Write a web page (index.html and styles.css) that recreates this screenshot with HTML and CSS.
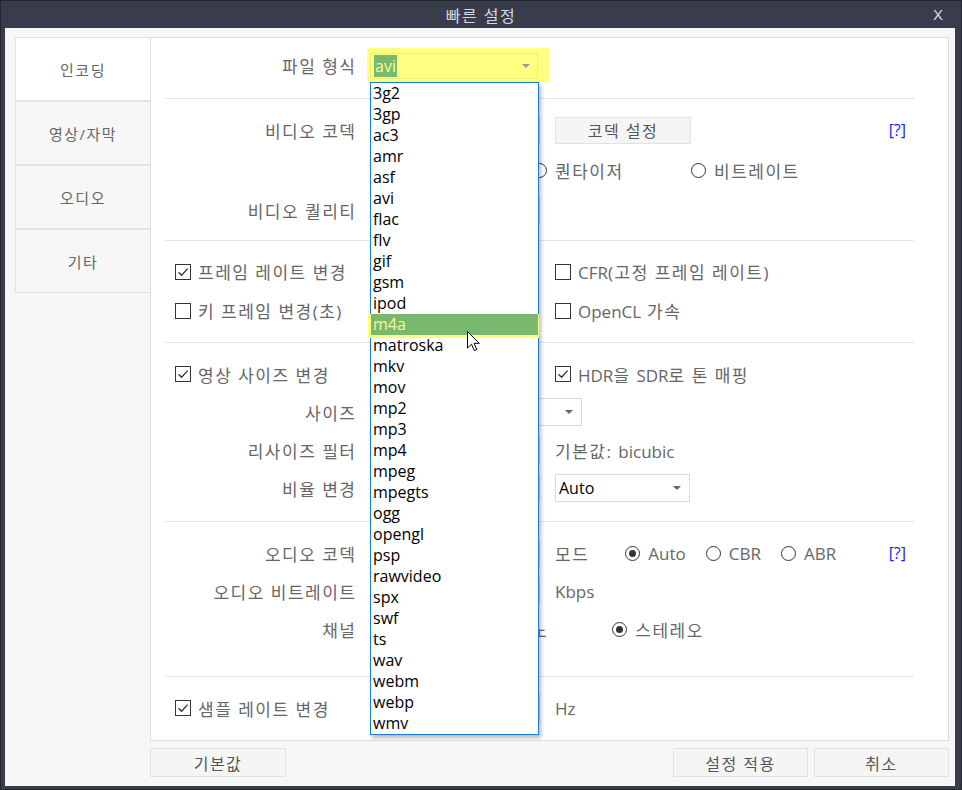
FILE: index.html
```html
<!DOCTYPE html>
<html lang="ko">

<head>
    <meta charset="UTF-8">
    <meta name="viewport" content="width=device-width, initial-scale=1.0">
    <title>빠른 설정</title>
    <link rel="stylesheet" href="styles.css">
</head>

<body>
    <div class="window">
        <div class="titlebar">
            <span class="title">빠른 설정</span>
            <span class="close">X</span>
        </div>
        <div class="client">
            <div class="main">
                <ul class="tabs">
                    <li class="tab active">인코딩</li>
                    <li class="tab">영상/자막</li>
                    <li class="tab">오디오</li>
                    <li class="tab">기타</li>
                </ul>
                <div class="panel">
                    <!-- file format -->
                    <section class="sec sec-format">
                        <div class="row">
                            <span class="lbl">파일 형식</span>
                            <div class="hl">
                                <div class="select sel-format"><span class="sel-text">avi</span><span class="caret"></span></div>
                                <ul class="droplist">
                                    <li>3g2</li>
                                    <li>3gp</li>
                                    <li>ac3</li>
                                    <li>amr</li>
                                    <li>asf</li>
                                    <li>avi</li>
                                    <li>flac</li>
                                    <li>flv</li>
                                    <li>gif</li>
                                    <li>gsm</li>
                                    <li>ipod</li>
                                    <li class="hot">m4a</li>
                                    <li>matroska</li>
                                    <li>mkv</li>
                                    <li>mov</li>
                                    <li>mp2</li>
                                    <li>mp3</li>
                                    <li>mp4</li>
                                    <li>mpeg</li>
                                    <li>mpegts</li>
                                    <li>ogg</li>
                                    <li>opengl</li>
                                    <li>psp</li>
                                    <li>rawvideo</li>
                                    <li>spx</li>
                                    <li>swf</li>
                                    <li>ts</li>
                                    <li>wav</li>
                                    <li>webm</li>
                                    <li>webp</li>
                                    <li>wmv</li>
                                </ul>
                                <svg class="cursor" width="14" height="22" viewBox="0 0 14 22">
                                    <path d="M0.5 0.5 V17 L4.5 13.2 L7.3 19.6 L9.8 18.5 L7 12.3 H12.3 Z" fill="#fff" stroke="#000" stroke-width="1" />
                                </svg>
                            </div>
                        </div>
                    </section>

                    <!-- video codec -->
                    <section class="sec sec-video">
                        <div class="row row-40">
                            <span class="lbl">비디오 코덱</span>
                            <div class="select"><span class="caret"></span></div>
                            <div class="col3">
                                <button class="btn btn-codec">코덱 설정</button>
                                <a class="help">[?]</a>
                            </div>
                        </div>
                        <div class="row row-40">
                            <div class="radios rate-mode">
                                <label class="radio"><span class="dot"></span>퀀타이저</label>
                                <label class="radio"><span class="dot"></span>비트레이트</label>
                            </div>
                        </div>
                        <div class="row row-40">
                            <span class="lbl">비디오 퀄리티</span>
                            <div class="select"><span class="caret"></span></div>
                        </div>
                    </section>

                    <!-- frames -->
                    <section class="sec sec-frame">
                        <div class="row row-39">
                            <label class="check"><span class="box"><svg width="14" height="14" viewBox="0 0 14 14"><path d="M2.5 7.2 L5.6 10.2 L11.6 3.6" fill="none" stroke="#333" stroke-width="1.3" /></svg></span>프레임 레이트 변경</label>
                            <label class="check col3"><span class="box"></span><span><span class="en">CFR</span>(고정 프레임 레이트)</span></label>
                        </div>
                        <div class="row row-39">
                            <label class="check"><span class="box"></span>키 프레임 변경(초)</label>
                            <label class="check col3"><span class="box"></span><span><span class="en">OpenCL</span> 가속</span></label>
                        </div>
                    </section>

                    <!-- size -->
                    <section class="sec sec-size">
                        <div class="row">
                            <label class="check"><span class="box"><svg width="14" height="14" viewBox="0 0 14 14"><path d="M2.5 7.2 L5.6 10.2 L11.6 3.6" fill="none" stroke="#333" stroke-width="1.3" /></svg></span>영상 사이즈 변경</label>
                            <label class="check col3"><span class="box"><svg width="14" height="14" viewBox="0 0 14 14"><path d="M2.5 7.2 L5.6 10.2 L11.6 3.6" fill="none" stroke="#333" stroke-width="1.3" /></svg></span><span><span class="en">HDR</span>을 <span class="en">SDR</span>로 톤 매핑</span></label>
                        </div>
                        <div class="row">
                            <span class="lbl">사이즈</span>
                            <div class="select sel-size"><span class="caret"></span></div>
                        </div>
                        <div class="row">
                            <span class="lbl">리사이즈 필터</span>
                            <div class="select"><span class="caret"></span></div>
                            <span class="col3"><span>기본값: <span class="en">bicubic</span></span></span>
                        </div>
                        <div class="row">
                            <span class="lbl">비율 변경</span>
                            <div class="select"><span class="caret"></span></div>
                            <div class="col3">
                                <div class="select sel-small"><span>Auto</span><span class="caret"></span></div>
                            </div>
                        </div>
                    </section>

                    <!-- audio -->
                    <section class="sec sec-audio">
                        <div class="row">
                            <span class="lbl">오디오 코덱</span>
                            <div class="select"><span class="caret"></span></div>
                            <div class="col3">
                                <span>모드</span>
                                <div class="radios audio-mode">
                                    <label class="radio en"><span class="dot on"></span>Auto</label>
                                    <label class="radio en"><span class="dot"></span>CBR</label>
                                    <label class="radio en"><span class="dot"></span>ABR</label>
                                </div>
                                <a class="help">[?]</a>
                            </div>
                        </div>
                        <div class="row">
                            <span class="lbl">오디오 비트레이트</span>
                            <div class="select"><span class="caret"></span></div>
                            <span class="col3 en">Kbps</span>
                        </div>
                        <div class="row">
                            <span class="lbl">채널</span>
                            <div class="radios channels">
                                <label class="radio"><span class="dot"></span>모노</label>
                                <label class="radio"><span class="dot on"></span>스테레오</label>
                            </div>
                        </div>
                    </section>

                    <!-- sample rate -->
                    <section class="sec sec-sample">
                        <div class="row">
                            <label class="check"><span class="box"><svg width="14" height="14" viewBox="0 0 14 14"><path d="M2.5 7.2 L5.6 10.2 L11.6 3.6" fill="none" stroke="#333" stroke-width="1.3" /></svg></span>샘플 레이트 변경</label>
                            <div class="select"><span class="caret"></span></div>
                            <span class="col3 en">Hz</span>
                        </div>
                    </section>
                </div>
            </div>
            <div class="footer">
                <button class="btn">기본값</button>
                <button class="btn btn-apply">설정 적용</button>
                <button class="btn">취소</button>
            </div>
        </div>
    </div>
</body>

</html>
```

FILE: styles.css
```css
* {
    margin: 0;
    padding: 0;
    box-sizing: border-box;
}

body {
    background-color: #393c4b;
    font-family: "Open Sans", "Noto Sans CJK KR", sans-serif;
    font-size: 17px;
    color: #666;
}

.window {
    width: 962px;
    height: 790px;
    display: flex;
    flex-direction: column;
    background-color: #393c4b;
    border: 1px solid #24262e;
}

.titlebar {
    height: 27px;
    display: grid;
    grid-template-columns: 1fr auto 1fr;
    align-items: center;
    color: #d8dae3;
    font-size: 16px;
}

.title {
    grid-column: 2;
    letter-spacing: 1.5px;
}

.close {
    justify-self: end;
    padding-right: 18px;
    font-family: "Liberation Sans", sans-serif;
    font-size: 15px;
}

.client {
    flex: 1;
    margin: 0 6px 3px 4px;
    padding: 9px 6px 9px 10px;
    background-color: #f7f7f7;
    display: flex;
    flex-direction: column;
}

.main {
    display: flex;
    height: 704px;
}

/* hangul in the reference font runs wider, latin keeps its own spacing */
.tabs,
.panel,
.footer {
    letter-spacing: 1.5px;
}

.en,
.droplist,
.select,
.help {
    letter-spacing: 0;
}

/* left tabs */
.tabs {
    width: 135px;
    list-style: none;
    display: flex;
    flex-direction: column;
}

.tab {
    height: 64px;
    border: 1px solid #e2e2e2;
    border-right: none;
    background-color: #f7f7f7;
    display: flex;
    align-items: center;
    justify-content: center;
    font-size: 15px;
    color: #666;
}

.tab.active {
    background-color: #fff;
}

.panel {
    flex: 1;
    border: 1px solid #dedede;
    background-color: #fff;
}

/* sections */
.sec {
    margin: 0 34px 0 14px;
    border-bottom: 1px solid #e4e4e4;
}

.sec-format {
    padding: 8px 0 14px;
}

.sec-video {
    padding: 11px 0 10px;
}

.sec-frame {
    padding: 11px 0 12px;
}

.sec-size {
    padding: 12px 0 14px;
}

.sec-audio {
    padding: 12px 0 28px;
}

.sec-sample {
    padding: 12px 0 0;
    border-bottom: none;
}

.row {
    display: grid;
    grid-template-columns: 190px 170px 1fr;
    column-gap: 15px;
    align-items: center;
    height: 38px;
    white-space: nowrap;
}

.row-40 {
    height: 40px;
}

.row-39 {
    height: 39px;
}

.lbl {
    grid-column: 1;
    text-align: right;
    margin-right: -1.5px;
}

.col3 {
    grid-column: 3;
    display: flex;
    align-items: center;
}

.check {
    padding-left: 10px;
    display: flex;
    align-items: center;
    gap: 7px;
}

.check.col3 {
    padding-left: 0;
}

.box {
    width: 16px;
    height: 16px;
    border: 1px solid #333;
    background-color: #fff;
    display: flex;
    align-items: center;
    justify-content: center;
}

.radios {
    display: flex;
    align-items: center;
}

.radio {
    display: flex;
    align-items: center;
    gap: 8px;
}

.dot {
    width: 15px;
    height: 15px;
    border: 1px solid #333;
    border-radius: 50%;
    background-color: #fff;
}

.dot.on::after {
    content: "";
    display: block;
    width: 7px;
    height: 7px;
    margin: 3px;
    border-radius: 50%;
    background-color: #333;
}

.rate-mode {
    grid-column: 2 / 4;
    padding-left: 162px;
}

.rate-mode .radio {
    width: 159px;
}

.audio-mode {
    margin-left: 36px;
    gap: 20px;
}

.channels {
    grid-column: 2 / 4;
    padding-left: 121px;
    gap: 64px;
}

.help {
    margin-left: auto;
    margin-right: 8px;
    color: #1c1cf0;
    font-size: 16px;
}

/* selects */
.select {
    width: 170px;
    height: 28px;
    border: 1px solid #dcdcdc;
    background-color: #fff;
    display: flex;
    align-items: center;
    padding: 0 8px 0 3px;
    color: #000;
    font-size: 16px;
}

.caret {
    margin-left: auto;
    border-left: 4px solid transparent;
    border-right: 4px solid transparent;
    border-top: 4px solid #666;
}

.sel-size {
    grid-column: 2 / 4;
    width: 212px;
}

.sel-small {
    width: 135px;
}

.hl {
    position: relative;
    margin-left: -3px;
    width: 182px;
    padding: 5px 11px 3px 3px;
    background-color: #ffff80;
}

.sel-format {
    width: 168px;
    height: 26px;
    background-color: transparent;
    border-color: #ecec78;
    padding-right: 7px;
}

.sel-format .caret {
    border-top-color: #999;
}

.sel-text {
    background-color: #79b86f;
    color: #f6fc9e;
    line-height: 22px;
    padding: 0 1px;
}

/* open dropdown */
.droplist {
    position: absolute;
    top: 100%;
    left: 3px;
    width: 169px;
    list-style: none;
    background-color: #fff;
    border: 1px solid #1a7dd8;
    box-shadow: 2px 3px 4px rgba(0, 0, 0, 0.28);
    z-index: 5;
}

.droplist li {
    height: 21px;
    line-height: 21px;
    padding-left: 2px;
    font-size: 16px;
    color: #000;
}

.droplist .hot {
    background-color: #79b86f;
    color: #f2fa9c;
    box-shadow: -3px 0 0 #ffff80, 1px 0 0 #ffff80, -3px 3px 0 #ffff80, 1px 3px 0 #ffff80;
}

.cursor {
    position: absolute;
    left: 100px;
    top: 283px;
    z-index: 6;
}

/* buttons */
.btn {
    height: 29px;
    width: 136px;
    border: 1px solid #e2e2e2;
    background-color: #f5f5f5;
    font-family: inherit;
    font-size: 16px;
    color: #555;
    letter-spacing: inherit;
}

.btn-codec {
    height: 27px;
}

.footer {
    display: flex;
    gap: 6px;
    margin-top: 7px;
    padding-left: 135px;
}

.footer .btn-apply {
    margin-left: auto;
    width: 135px;
}

.footer .btn:last-child {
    width: 135px;
}
```
